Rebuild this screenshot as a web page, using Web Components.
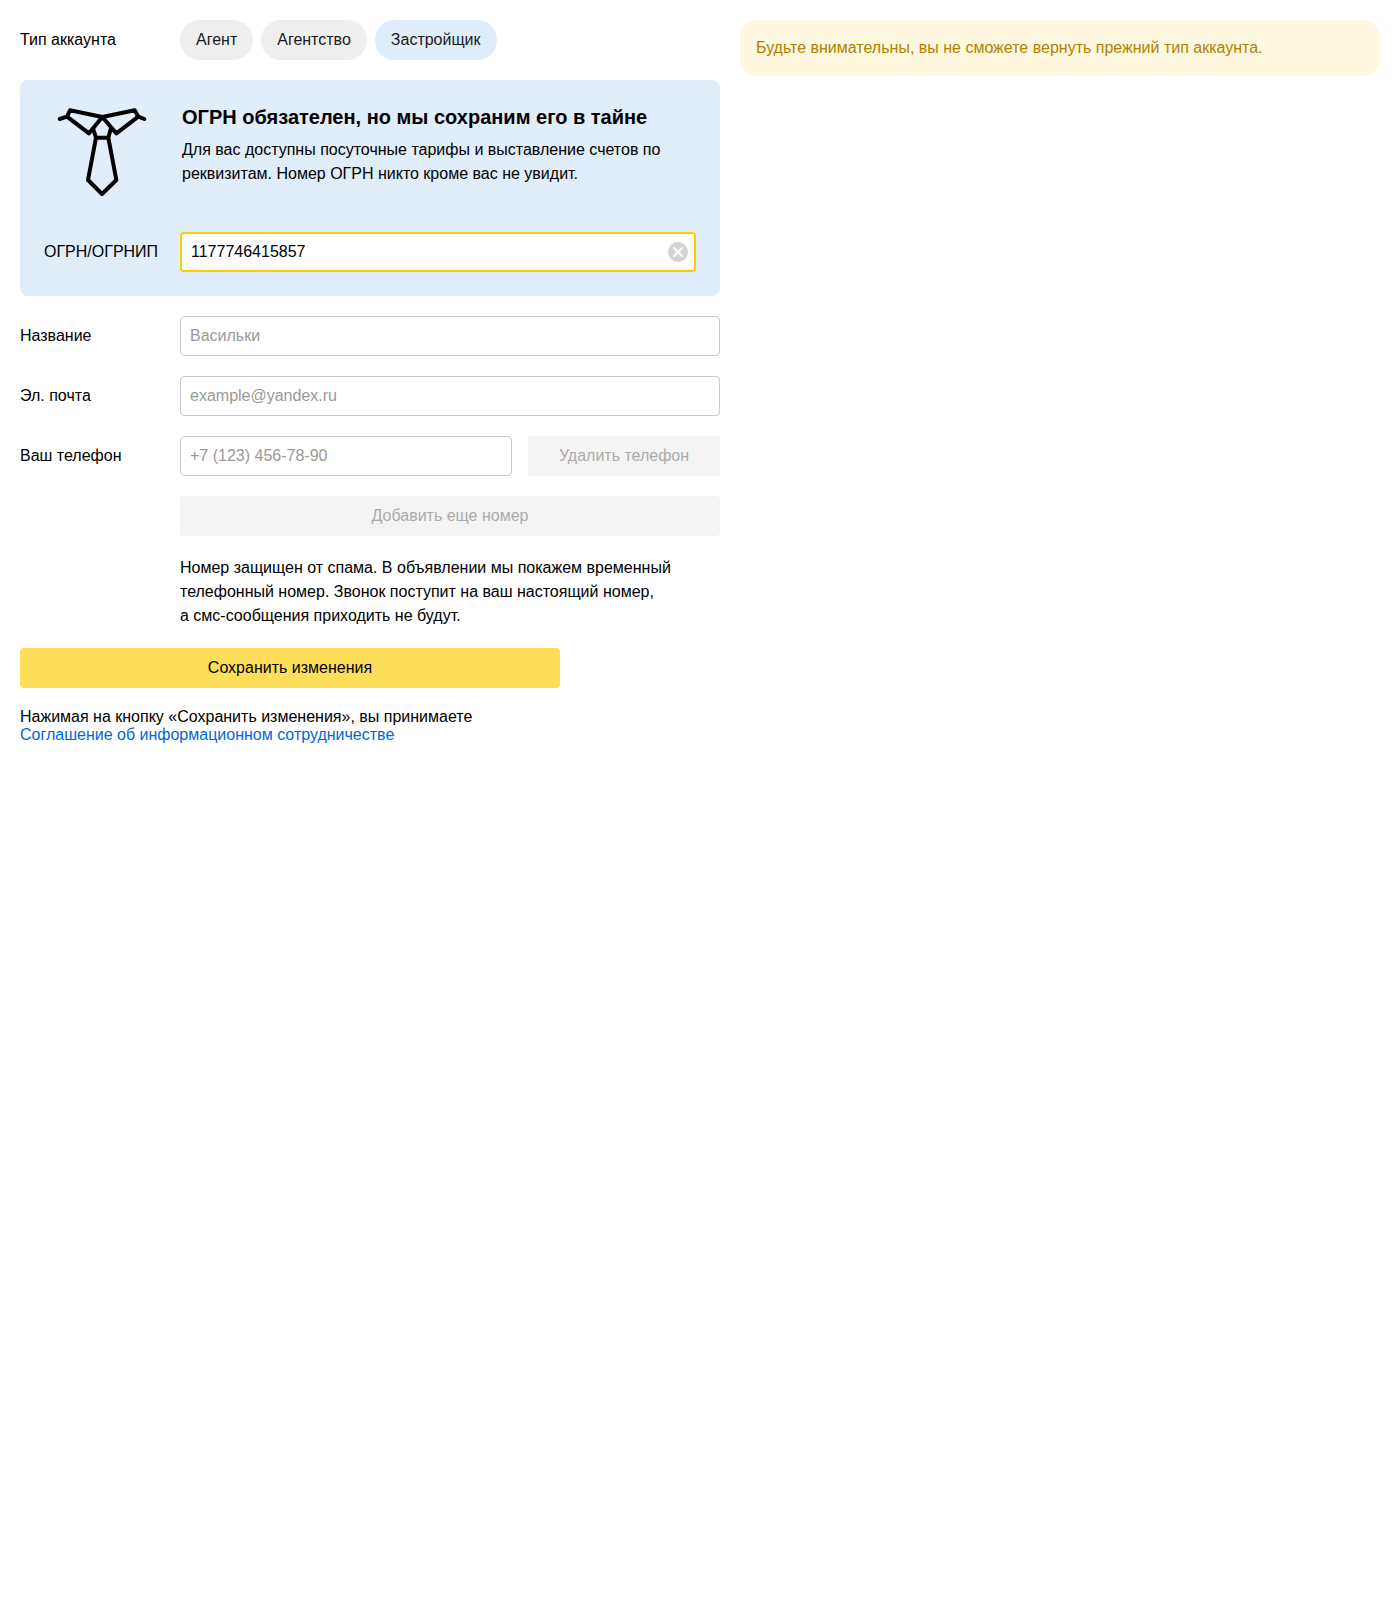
<!DOCTYPE html>
<html lang="ru">
<head>
<meta charset="utf-8">
<meta name="viewport" content="width=device-width, initial-scale=1">
<title>Тип аккаунта</title>
<style>
  body { margin: 0; background: #fff; color: #000; font: 16px/18px "Liberation Sans", Arial, sans-serif; }
</style>
</head>
<body>
<account-page>
  <account-form>
    <account-types></account-types>
    <ogrn-panel>
      <span slot="title">ОГРН обязателен, но мы сохраним его в тайне</span>
      Для вас доступны посуточные тарифы и выставление счетов по реквизитам. Номер ОГРН никто кроме вас не увидит.
      <text-field slot="field" inset active label="ОГРН/ОГРНИП" value="1177746415857"></text-field>
    </ogrn-panel>
    <text-field label="Название" hint="Васильки"></text-field>
    <text-field label="Эл. почта" type="email" hint="example@yandex.ru"></text-field>
    <text-field label="Ваш телефон" type="tel" hint="+7 (123) 456-78-90">
      <ui-button slot="after" class="remove" disabled>Удалить телефон</ui-button>
    </text-field>
    <form-indent><ui-button disabled>Добавить еще номер</ui-button></form-indent>
    <form-indent>Номер защищен от спама. В объявлении мы покажем временный телефонный номер. Звонок поступит на ваш настоящий номер,<br>а&nbsp;смс-сообщения приходить не будут.</form-indent>
    <save-block></save-block>
  </account-form>
  <account-notice slot="aside">Будьте внимательны, вы не сможете вернуть прежний тип аккаунта.</account-notice>
</account-page>

<script>
const define = (name, html, setup) => customElements.define(name, class extends HTMLElement {
  constructor() {
    super();
    this.attachShadow({ mode: "open" }).innerHTML =
      `<style>*{box-sizing:border-box}:host{display:block;box-sizing:border-box}</style>${html}`;
  }
  connectedCallback() { if (setup) setup(this, this.shadowRoot); }
});

define("account-page", `
  <style>
    :host { display: grid; grid-template-columns: minmax(0, 700px) minmax(0, 1fr); gap: 20px; padding: 20px; align-items: start; }
    @media (max-width: 900px) { :host { grid-template-columns: minmax(0, 1fr); } }
  </style>
  <main><slot></slot></main>
  <aside><slot name="aside"></slot></aside>`);

define("account-form", `
  <style>:host { display: flex; flex-direction: column; gap: 20px; }</style>
  <slot></slot>`);

define("account-notice", `
  <style>:host { padding: 16px; border-radius: 16px; background: #fff8e0; color: #b38000; line-height: 24px; }</style>
  <slot></slot>`);

define("account-types", `
  <style>
    :host { display: grid; grid-template-columns: 160px minmax(0, 1fr); align-items: center; }
    div { display: flex; flex-wrap: wrap; gap: 8px; }
    button { height: 40px; padding: 0 16px; border: 0; border-radius: 20px; background: #efefef; color: #1a1a1a; font: inherit; cursor: pointer; }
    button[aria-pressed="true"] { background: #e0edfb; }
  </style>
  <span id="caption">Тип аккаунта</span>
  <div role="group" aria-labelledby="caption">
    <button type="button" aria-pressed="false">Агент</button>
    <button type="button" aria-pressed="false">Агентство</button>
    <button type="button" aria-pressed="true">Застройщик</button>
  </div>`, (host, root) => {
    const buttons = root.querySelectorAll("button");
    buttons.forEach(b => b.onclick = () => buttons.forEach(o => o.setAttribute("aria-pressed", o === b)));
  });

define("ogrn-panel", `
  <style>
    :host { padding: 24px; border-radius: 8px; background: #e0edfb; }
    .intro { display: flex; gap: 32px; padding: 0 10px; margin-bottom: 32px; }
    svg { flex: none; width: 96px; height: 96px; fill: none; stroke: #000; stroke-width: 12; stroke-linecap: round; stroke-linejoin: round; }
    h2 { margin: 0 0 8px; font-size: 20px; line-height: 26px; }
    p { margin: 0; line-height: 24px; }
  </style>
  <div class="intro">
    <svg viewBox="12 12 288 288" aria-hidden="true">
      <path d="M29 57 51 50 60 31 157 51 254 31 265 50 283 57M51 50 117 100 157 51 199 100 265 50"/>
      <path d="M130 88 138 113H175L182 88M138 113 114 240 156 282 199 240 175 113"/>
    </svg>
    <div><h2><slot name="title"></slot></h2><p><slot></slot></p></div>
  </div>
  <slot name="field"></slot>`);

define("text-field", `
  <style>
    :host { display: grid; grid-template-columns: 160px minmax(0, 1fr); align-items: center; }
    :host([inset]) { grid-template-columns: 136px minmax(0, 1fr); }
    .line { display: flex; gap: 16px; }
    .box { flex: 1; min-width: 0; display: flex; align-items: center; height: 40px; border: 1px solid #ccc; border-radius: 4px; background: #fff; padding: 0 9px; }
    :host([active]) .box { border: 2px solid #fc0; padding-right: 6px; }
    input { flex: 1; min-width: 0; height: 100%; padding: 0; border: 0; outline: 0; background: none; color: #000; font: inherit; }
    input::placeholder { color: #999; opacity: 1; }
    button { display: none; width: 20px; height: 20px; padding: 0; border: 0; background: none; cursor: pointer; }
    :host([active]) button { display: block; }
    svg { display: block; }
    ::slotted(.remove) { width: 192px; }
  </style>
  <label for="input"></label>
  <div class="line">
    <div class="box">
      <input id="input">
      <button type="button" aria-label="Очистить">
        <svg width="20" height="20" viewBox="0 0 20 20"><circle cx="10" cy="10" r="10" fill="#d3d3d3"/><path d="M6 6l8 8M14 6l-8 8" stroke="#fff" stroke-width="2" stroke-linecap="round"/></svg>
      </button>
    </div>
    <slot name="after"></slot>
  </div>`, (host, root) => {
    const input = root.querySelector("input");
    root.querySelector("label").textContent = host.getAttribute("label");
    input.type = host.getAttribute("type") || "text";
    input.placeholder = host.getAttribute("hint") || "";
    input.value = host.getAttribute("value") || "";
    root.querySelector("button").onclick = () => { input.value = ""; input.focus(); };
  });

define("ui-button", `
  <style>
    button { width: 100%; height: 40px; padding: 0 16px; border: 0; border-radius: 4px; background: #ffde5a; color: #000; font: inherit; cursor: pointer; }
    button:disabled { background: #f4f4f4; color: #aaa; cursor: default; }
  </style>
  <button type="button"><slot></slot></button>`, (host, root) => {
    root.querySelector("button").disabled = host.hasAttribute("disabled");
  });

define("form-indent", `
  <style>:host { padding-left: 160px; line-height: 24px; }</style>
  <slot></slot>`);

define("save-block", `
  <style>
    ui-button { max-width: 540px; }
    p { margin: 20px 0 0; }
    a { color: #0067d9; text-decoration: none; }
  </style>
  <ui-button>Сохранить изменения</ui-button>
  <p>Нажимая на кнопку «Сохранить изменения», вы принимаете<br><a href="#agreement">Соглашение об информационном сотрудничестве</a></p>`);
</script>
</body>
</html>
